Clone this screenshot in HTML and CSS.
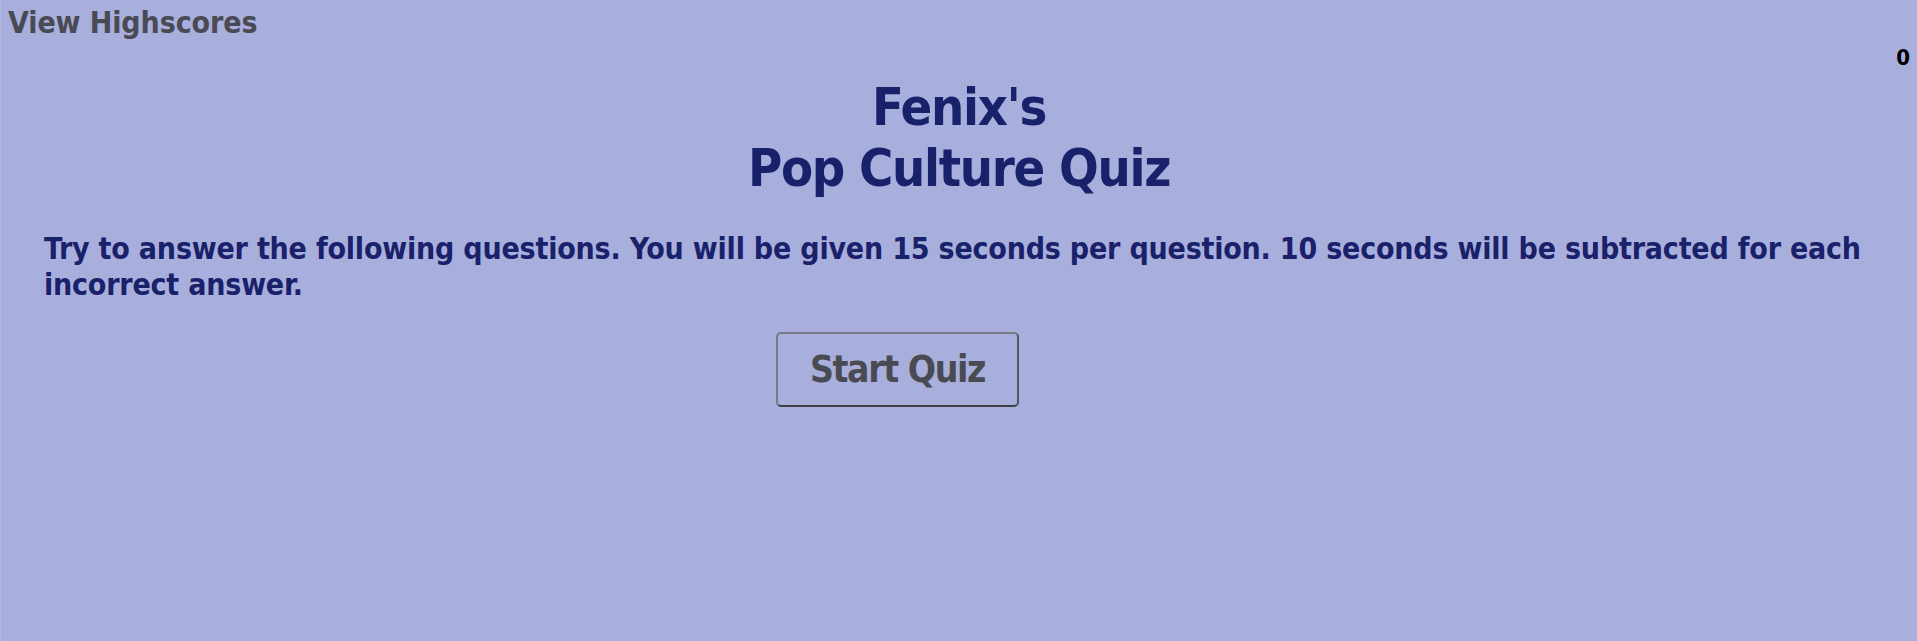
FILE: index.html
```html
<!DOCTYPE html>
<html lang="en">
<head>
<meta charset="utf-8">
<title>Fenix's Pop Culture Quiz</title>
<link rel="stylesheet" href="styles.css">
</head>
<body>
<div class="page">
  <header class="topbar">
    <a class="highscores" href="#">View Highscores</a>
    <div class="timer">0</div>
  </header>
  <main class="quiz">
    <h1 class="title">Fenix's<br>Pop Culture Quiz</h1>
    <p class="intro">Try to answer the following questions. You will be given 15 seconds per question. 10 seconds will be subtracted for each incorrect answer.</p>
    <div class="actions">
      <button class="start" type="button">Start Quiz</button>
    </div>
  </main>
</div>
</body>
</html>
```

FILE: styles.css
```css
html, body {
  margin: 0;
  padding: 0;
  height: 100%;
}

body {
  background: #a8afdc;
  font-family: "DejaVu Sans Condensed", "DejaVu Sans", sans-serif;
  font-weight: bold;
}

.page {
  min-height: 100%;
  box-sizing: border-box;
  border-left: 1px solid #b4bae2;
}

.topbar {
  display: flex;
  justify-content: space-between;
  align-items: flex-start;
  padding: 0 7px 0 7px;
}

.highscores {
  color: #4a4a55;
  text-decoration: none;
  font-size: 30px;
  line-height: 35px;
  margin-top: 5px;
  letter-spacing: -0.1px;
}

.timer {
  color: #000;
  font-size: 22px;
  line-height: 26px;
  margin-top: 45px;
}

.quiz {
  display: flex;
  flex-direction: column;
}

.title {
  margin: 6px 0 0 0;
  text-align: center;
  color: #1a216b;
  font-size: 52px;
  line-height: 61px;
  letter-spacing: -1.3px;
}

.intro {
  margin: 32px 36px 0 43px;
  color: #1a216b;
  font-size: 30px;
  line-height: 36px;
  letter-spacing: -0.2px;
}

.actions {
  display: flex;
  padding-left: 775px;
  margin-top: 29px;
}

.start {
  width: 243px;
  height: 75px;
  box-sizing: border-box;
  background: transparent;
  border: 2px solid;
  border-color: #7b7b85 #55555e #3e3e46 #7b7b85;
  border-radius: 5px;
  color: #4a4a52;
  font-family: inherit;
  font-weight: bold;
  font-size: 37px;
  letter-spacing: -1.4px;
  padding: 0;
}
```
